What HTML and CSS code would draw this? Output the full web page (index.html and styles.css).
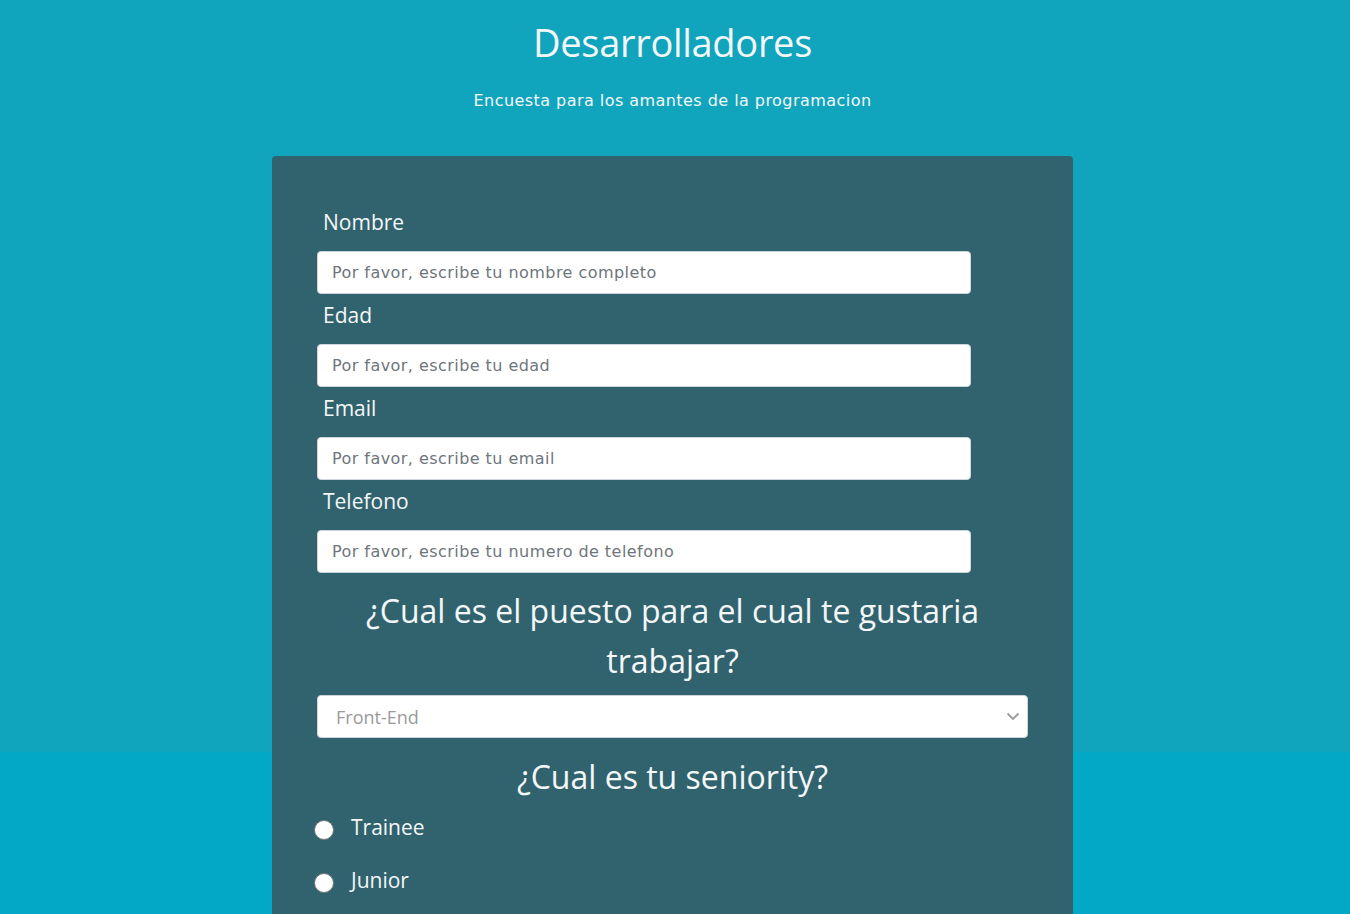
FILE: index.html
```html
<!DOCTYPE html>
<html lang="es">
<head>
<meta charset="utf-8">
<title>Desarrolladores</title>
<link rel="stylesheet" href="styles.css">
</head>
<body>
<div class="page">
<header class="header">
  <h1 class="title">Desarrolladores</h1>
  <p class="description">Encuesta para los amantes de la programacion</p>
</header>
<main class="card">
  <form class="survey">
    <div class="group">
      <label class="label" for="name">Nombre</label>
      <input class="input" id="name" type="text" placeholder="Por favor, escribe tu nombre completo">
    </div>
    <div class="group">
      <label class="label" for="age">Edad</label>
      <input class="input" id="age" type="text" placeholder="Por favor, escribe tu edad">
    </div>
    <div class="group">
      <label class="label" for="email">Email</label>
      <input class="input" id="email" type="text" placeholder="Por favor, escribe tu email">
    </div>
    <div class="group">
      <label class="label" for="phone">Telefono</label>
      <input class="input" id="phone" type="text" placeholder="Por favor, escribe tu numero de telefono">
    </div>
    <h2 class="question">¿Cual es el puesto para el cual te gustaria trabajar?</h2>
    <div class="select-wrap">
      <select class="select">
        <option>Front-End</option>
      </select>
      <svg class="chevron" width="14" height="9" viewBox="0 0 14 9"><path d="M1.5 1.5 7 7l5.5-5.5" fill="none" stroke="#9a9a9a" stroke-width="1.8"/></svg>
    </div>
    <h2 class="question q2">¿Cual es tu seniority?</h2>
    <label class="radio first"><span class="dot"></span>Trainee</label>
    <label class="radio"><span class="dot"></span>Junior</label>
  </form>
</main>
</div>
</body>
</html>
```
FILE: styles.css
```css
html, body { margin: 0; padding: 0; }
body {
  background: linear-gradient(#10a5bd, #10a5bd) no-repeat top left / 100% 752px, #02a8c5;
  color: #f4f7f8;
  font-family: "Open Sans", "Noto Sans", sans-serif;
  height: 914px;
  overflow: hidden;
}
.page { width: 1345px; }
.header { text-align: center; padding-top: 16px; }
.title {
  margin: 0;
  font-size: 38px;
  font-weight: 400;
  line-height: 52px;
  letter-spacing: -0.3px;
}
.description {
  margin: 23px 0 0;
  font-family: "DejaVu Sans", sans-serif;
  font-size: 16px;
  letter-spacing: 0.45px;
  line-height: 20px;
}
.card {
  width: 801px;
  margin: 45px auto 0;
  background: #31636f;
  border-radius: 4px 4px 0 0;
  padding: 45px 45px 40px;
  box-sizing: border-box;
  min-height: 800px;
}
.survey { display: flex; flex-direction: column; }
.group { display: flex; flex-direction: column; }
.label {
  font-size: 21px;
  line-height: 26px;
  padding: 8px 0 0 6px;
  height: 50px;
  box-sizing: border-box;
}
.input {
  width: 654px;
  height: 43px;
  box-sizing: border-box;
  border: 1px solid #ced4da;
  border-radius: 4px;
  background: #fff;
  padding: 0 14px;
  font-family: "DejaVu Sans", sans-serif;
  font-size: 16px;
  letter-spacing: 0.45px;
  color: #495057;
  outline: none;
}
.input::placeholder { color: #6e757b; }
.question {
  margin: 13px 0 0;
  text-align: center;
  font-size: 32px;
  font-weight: 400;
  line-height: 50px;
}
.q2 { margin-top: 14px; }
.select-wrap { position: relative; margin-top: 9px; }
.select {
  width: 711px;
  height: 43px;
  box-sizing: border-box;
  border: 1px solid #ced4da;
  border-radius: 4px;
  background: #fff;
  padding: 0 18px;
  font-family: "Open Sans", sans-serif;
  font-size: 18px;
  color: #9a9a9a;
  appearance: none;
  -webkit-appearance: none;
}
.chevron { position: absolute; right: 8px; top: 17px; }
.radio {
  display: flex;
  align-items: center;
  font-size: 21px;
  line-height: 26px;
  margin-top: 14px;
  height: 39px;
}
.radio.first { margin-top: 5px; }
.dot {
  width: 20px;
  height: 20px;
  border-radius: 50%;
  background: #fff;
  border: 1px solid #767676;
  margin: 6px 17px 0 -3px;
  box-sizing: border-box;
  flex: none;
}
```
